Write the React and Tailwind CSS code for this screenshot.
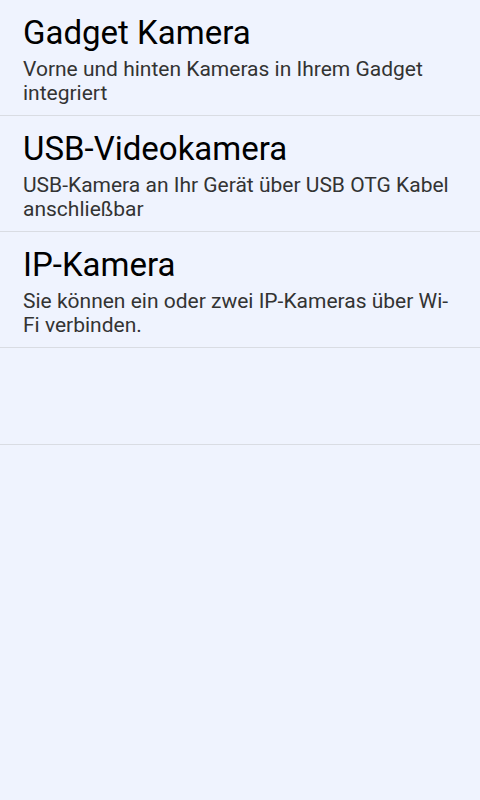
const items = [
  {
    title: 'Gadget Kamera',
    text: 'Vorne und hinten Kameras in Ihrem Gadget integriert',
  },
  {
    title: 'USB-Videokamera',
    text: 'USB-Kamera an Ihr Gerät über USB OTG Kabel anschließbar',
  },
  {
    title: 'IP-Kamera',
    text: 'Sie können ein oder zwei IP-Kameras über Wi-Fi verbinden.',
  },
]

export default function App() {
  return (
    <div className="min-h-[800px] w-[480px] bg-[#eff3fe] font-['Roboto',sans-serif]">
      {items.map((item) => (
        <div key={item.title} className="border-b border-[#d9dce3] pl-[23px] pr-6 pt-[15px] pb-[10px]">
          <h2 className="text-[33px] leading-[36px] text-black">{item.title}</h2>
          <p className="mt-[6px] text-[21px] leading-[24px] text-[#333]">{item.text}</p>
        </div>
      ))}
      <div className="h-[97px] border-b border-[#d9dce3]" />
    </div>
  )
}
